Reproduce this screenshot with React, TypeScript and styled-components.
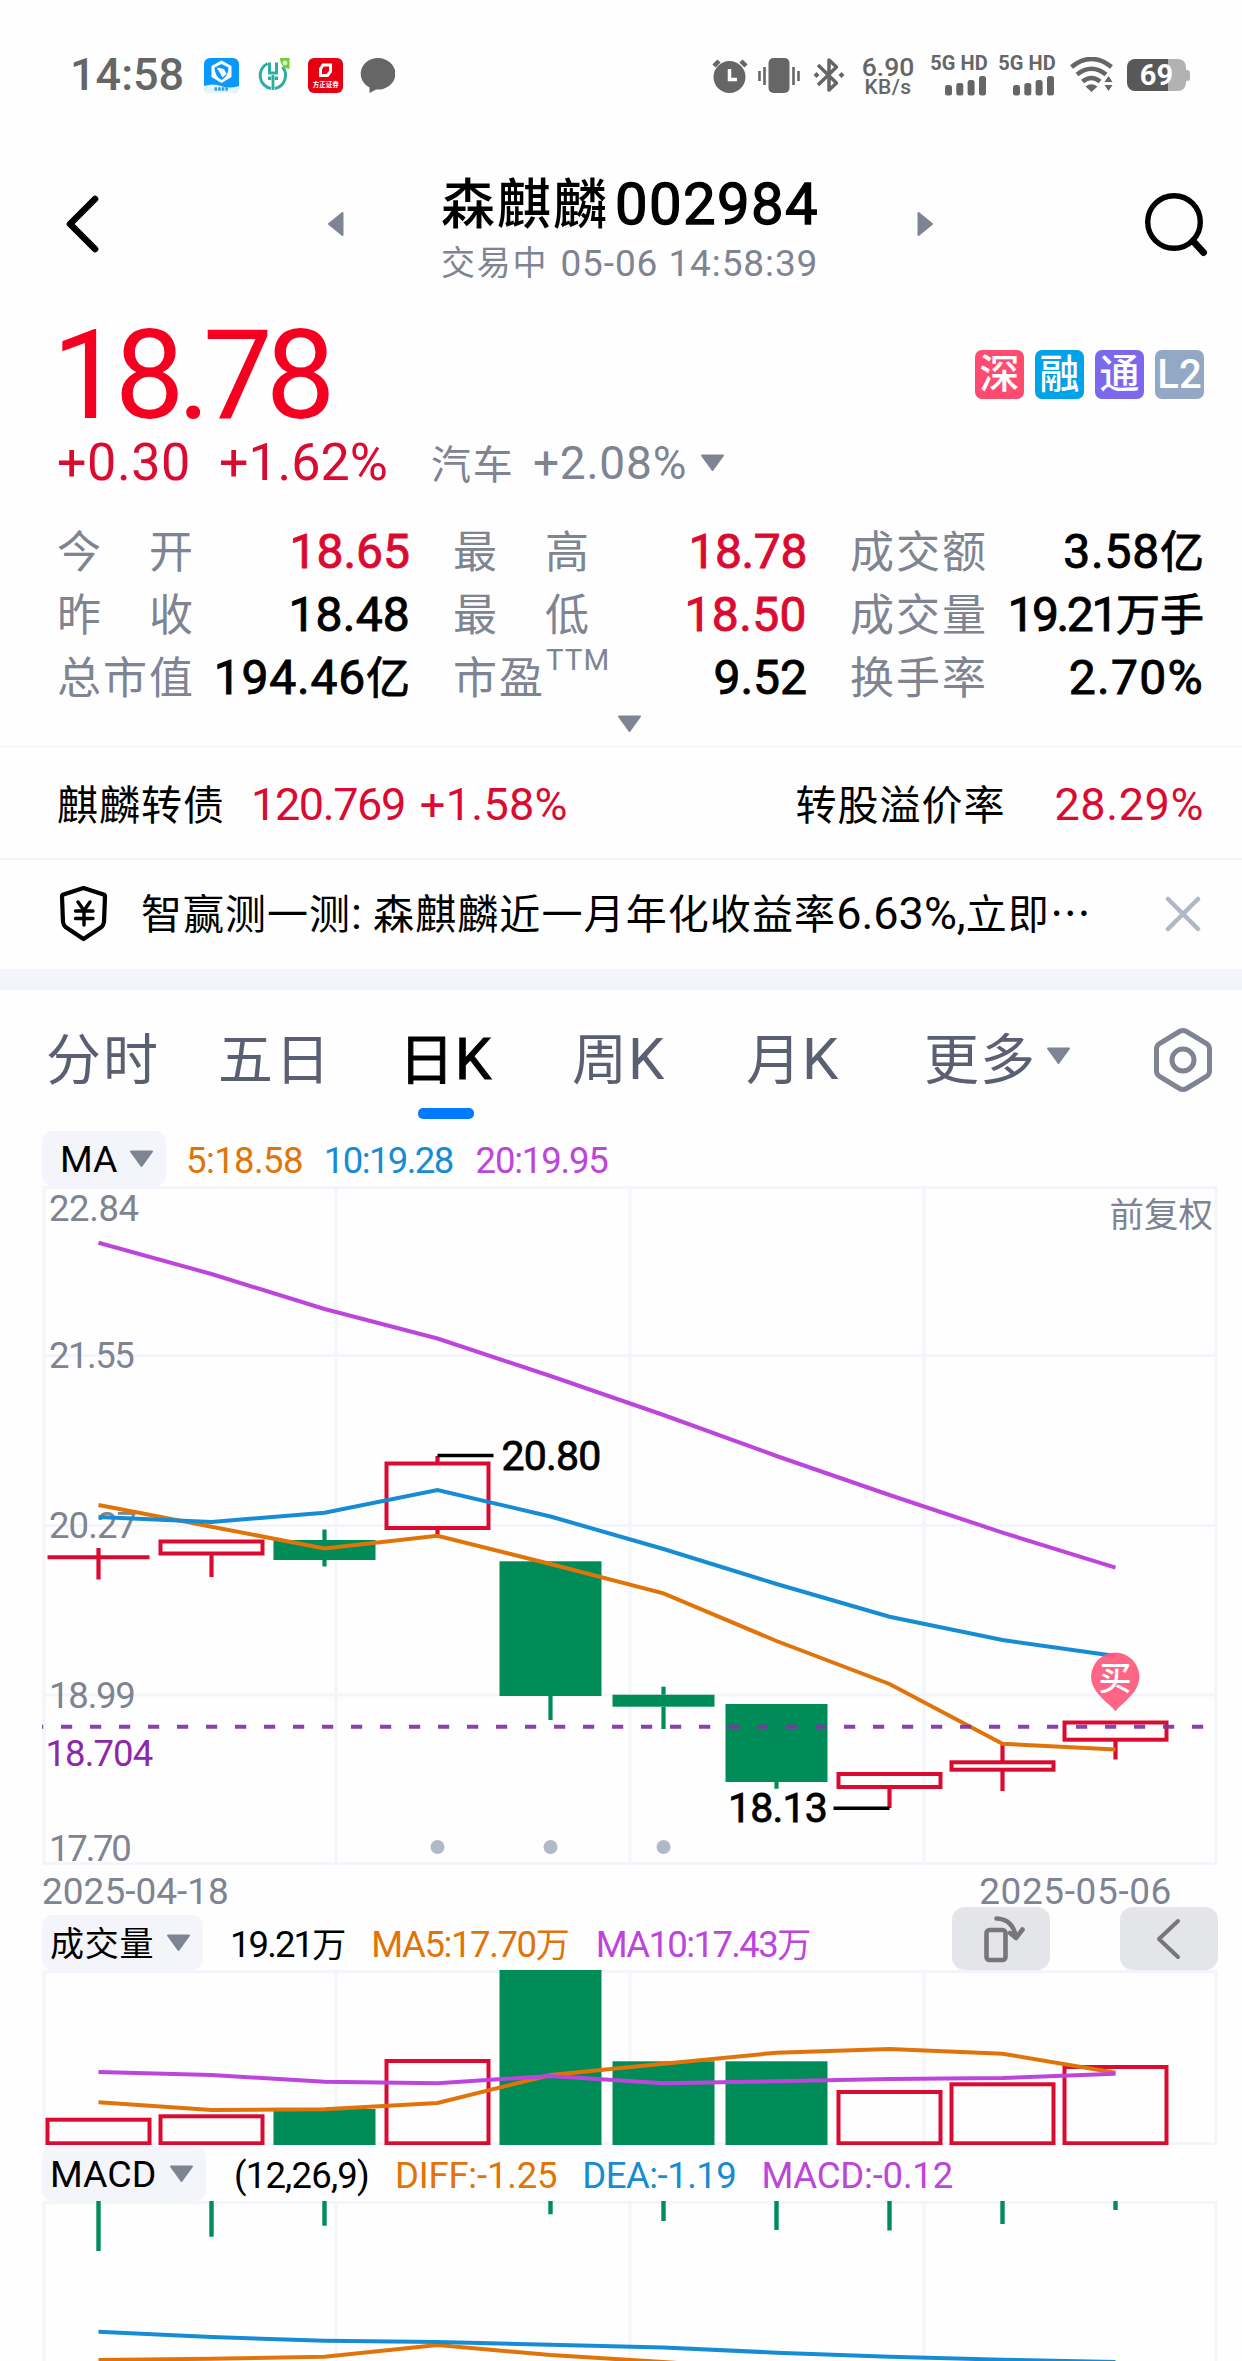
import React from 'react';
import styled, { createGlobalStyle } from 'styled-components';

const GRAY = '#7e8492';
const RED = '#db0a30';
const GREEN = '#008c58';
const ORANGE = '#e07409';
const BLUE = '#168cd4';
const PURPLE = '#bd45dc';
const PALE = '#f4f5fa';
const FONT = `Roboto, 'Noto Sans CJK SC', sans-serif`;

const GlobalStyle = createGlobalStyle`
  * { box-sizing: border-box; }
  body { margin: 0; background: #fefefe; }
`;

const Page = styled.main`
  width: 1242px;
  height: 2361px;
  overflow: hidden;
  background: #fefefe;
  font-family: ${FONT};
  color: #000;
  display: flex;
  flex-direction: column;
  white-space: pre;
  svg { display: block; flex: none; }
`;

/* ---------- text ---------- */

const Text = styled.span<{ $size: number; $color?: string; $weight?: number; $ls?: number; $ml?: number; $stroke?: number }>`
  font-size: ${(p) => p.$size}px;
  color: ${(p) => p.$color ?? 'inherit'};
  font-weight: ${(p) => p.$weight ?? 400};
  letter-spacing: ${(p) => p.$ls ?? 0}px;
  margin-left: ${(p) => p.$ml ?? 0}px;
  -webkit-text-stroke-width: ${(p) => p.$stroke ?? 0}px;
`;

const Han = styled.span<{ $size: number; $ls?: number; $weight?: number }>`
  font-family: 'Noto Sans CJK SC', sans-serif;
  font-size: ${(p) => p.$size}px;
  font-weight: ${(p) => p.$weight ?? 'inherit'};
  letter-spacing: ${(p) => p.$ls ?? 0}px;
  line-height: 0;
`;

/* ---------- status bar ---------- */

const StatusBar = styled.header`
  height: 100px;
  padding: 50px 52px 0 70px;
  display: flex;
  justify-content: space-between;
  line-height: 50px;
  color: #666;
`;

const StatusGroup = styled.div`
  display: flex;
  align-items: center;
`;

const StatusIcon = styled.span<{ $ml: number }>`
  margin-left: ${(p) => p.$ml}px;
`;

const NetSpeed = styled.div`
  width: 56px;
  margin-left: 15px;
  padding-top: 3px;
  display: flex;
  flex-direction: column;
  align-items: center;
  line-height: 21px;
`;

const SignalStack = styled.div<{ $ml: number }>`
  width: 58px;
  margin-left: ${(p) => p.$ml}px;
  display: flex;
  flex-direction: column;
  align-items: center;
  gap: 4px;
  line-height: 17px;
`;

const AppTile = styled.div<{ $ml: number }>`
  width: 35px;
  height: 35px;
  margin-left: ${(p) => p.$ml}px;
  border-radius: 6px;
  background: #e60012;
  color: #fff;
  display: flex;
  flex-direction: column;
  align-items: center;
  padding-top: 5px;
`;

const TileCaption = styled.span`
  font: 700 6.5px/8px 'Noto Sans CJK SC', sans-serif;
  margin-top: 2px;
`;

const Battery = styled.div`
  display: flex;
  align-items: center;
  margin-left: 14px;
`;

const BatteryBody = styled.div`
  width: 59px;
  height: 32px;
  border-radius: 8px;
  background: linear-gradient(90deg, #585858 70%, #b2b2b2 70%);
  color: #fff;
  font-size: 29px;
  font-weight: 700;
  line-height: 33px;
  text-align: center;
`;

const BatteryTip = styled.div`
  width: 4px;
  height: 11px;
  border-radius: 0 3px 3px 0;
  background: #b2b2b2;
`;

/* ---------- header ---------- */

const Header = styled.section`
  height: 200px;
  display: grid;
  grid-template-columns: 265px 114px 476px 225px 64px;
  align-items: center;
  padding: 48px 0 0 62px;
`;

const TitleBlock = styled.div`
  display: flex;
  flex-direction: column;
  align-self: start;
  margin-top: 26px;
`;

const TitleLine = styled.div`
  display: flex;
  align-items: baseline;
  height: 60px;
  line-height: 60px;
`;

const SubLine = styled.div`
  display: flex;
  height: 58px;
  line-height: 59px;
  color: ${GRAY};
`;

/* ---------- quote ---------- */

const Quote = styled.section`
  height: 447px;
  padding: 12px 38px 0 57px;
  border-bottom: 1px solid #f1f1f4;
`;

const PriceRow = styled.div`
  height: 128px;
  line-height: 128px;
  display: flex;
  justify-content: space-between;
`;

const Badges = styled.div`
  display: flex;
  gap: 11px;
  padding-top: 38px;
`;

const Badge = styled.span<{ $bg: string }>`
  width: 49px;
  height: 49px;
  border-radius: 7px;
  background: ${(p) => p.$bg};
  color: #fff;
  font-size: 40px;
  font-weight: 500;
  line-height: 49px;
  text-align: center;
`;

const ChangeRow = styled.div`
  height: 46px;
  line-height: 46px;
  display: flex;
  align-items: center;
`;

const ChangeCaret = styled.span`
  margin-left: 13px;
`;

const Stats = styled.div`
  margin-top: 34px;
  display: grid;
  grid-template-columns: 353px 354px 354px;
  column-gap: 43px;
  grid-auto-rows: 63px;
`;

const Stat = styled.div`
  display: flex;
  justify-content: space-between;
  line-height: 63px;
`;

const StatLabel = styled.span`
  width: 136px;
  padding-top: 2px;
  display: flex;
  justify-content: space-between;
  font-size: 44px;
  color: ${GRAY};
`;

const PeLabel = styled.span`
  display: flex;
  align-items: flex-start;
  color: ${GRAY};
  padding-top: 2px;
`;

const Sup = styled.span`
  font-size: 29.5px;
  line-height: 24px;
  letter-spacing: 1px;
  margin-left: 1px;
`;

const StatValue = styled.span<{ $up?: boolean; $ls?: number }>`
  font-size: 48px;
  -webkit-text-stroke-width: 0.9px;
  letter-spacing: ${(p) => p.$ls ?? 0}px;
  color: ${(p) => (p.$up ? RED : '#000')};
`;

const Expand = styled.div`
  display: flex;
  justify-content: center;
  padding-top: 6px;
  margin-right: 3px;
`;

/* ---------- rows under the quote ---------- */

const BondRow = styled.section`
  height: 113px;
  padding: 3px 38px 0 57px;
  line-height: 109px;
  border-bottom: 2px solid ${PALE};
  display: flex;
`;

const Spacer = styled.div`
  flex: 1;
`;

const Notice = styled.section`
  height: 109px;
  padding: 0 41px 2px 58px;
  line-height: 106px;
  display: flex;
  align-items: center;
`;

const Band = styled.div`
  height: 21px;
  background: ${PALE};
`;

/* ---------- tabs ---------- */

const Tabs = styled.nav`
  height: 140px;
  padding: 20px 0 0 46px;
  display: grid;
  grid-template-columns: 172px 181px 173px 174px 178px 226px auto;
`;

const Tab = styled.div<{ $active?: boolean }>`
  color: ${(p) => (p.$active ? '#000' : '#5a6072')};
  -webkit-text-stroke-width: ${(p) => (p.$active ? 1 : 0)}px;
`;

const TabLabel = styled.div`
  height: 98px;
  display: flex;
  font-size: 58px;
  line-height: 98px;
`;

const TabCaret = styled.span`
  padding-top: 37px;
  margin-left: 10px;
`;

const Underline = styled.div`
  width: 56px;
  height: 11px;
  border-radius: 5px;
  margin-left: 19px;
  background: #007aff;
`;

const Settings = styled.div`
  padding-top: 17px;
`;

/* ---------- indicator rows ---------- */

const IndicatorRow = styled.div<{ $h: number }>`
  height: ${(p) => p.$h}px;
  padding: 0 24px 0 42px;
  display: flex;
  align-items: flex-end;
`;

const Pill = styled.div<{ $w: number; $pl: number }>`
  width: ${(p) => p.$w}px;
  height: 55px;
  padding: 1px 12px 0 ${(p) => p.$pl}px;
  border-radius: 11px;
  background: ${PALE};
  display: flex;
  align-items: center;
  justify-content: space-between;
  line-height: 57px;
`;

const Values = styled.div`
  display: flex;
  line-height: 50px;
`;

const ToolButton = styled.button<{ $ml: number }>`
  width: 98px;
  height: 63px;
  margin: 0 0 0 ${(p) => p.$ml}px;
  padding: 0;
  border: 0;
  border-radius: 13px;
  background: #e4e5e9;
  display: flex;
  align-items: center;
  justify-content: center;
`;

const DateRow = styled.div`
  height: 41px;
  padding: 0 70px 0 42px;
  line-height: 51px;
  display: flex;
  justify-content: space-between;
  color: ${GRAY};
`;

const ChartSvg = styled.svg`
  overflow: visible;
`;

/* ---------- icons ---------- */

const Caret = () => (
  <svg width="25" height="18" viewBox="0 0 25 18">
    <path d="M2 1.5H23L12.5 16Z" fill={GRAY} stroke={GRAY} strokeWidth="2" strokeLinejoin="round" />
  </svg>
);

const SideArrow = ({ flip }: { flip?: boolean }) => (
  <svg width="17" height="26" viewBox="0 0 17 26">
    <path d={flip ? 'M1.5 2V24L15 13Z' : 'M15.5 2V24L2 13Z'} fill={GRAY} stroke={GRAY} strokeWidth="2" strokeLinejoin="round" />
  </svg>
);

const ShieldApp = () => (
  <svg width="35" height="35" viewBox="0 0 35 35">
    <rect width="35" height="35" rx="6" fill="#0a98fb" />
    <path d="M0 28Q9 25 17 28T35 28V29Q35 35 29 35H6Q0 35 0 29Z" fill="#e3f5ff" />
    <path d="M17.500 2.500L27.500 8V19L17.500 25L7.500 19V8Z" fill="#fff" />
    <path d="M17.500 6L24.500 9.500Q24.500 18 17.500 22Q10.500 18 10.500 9.500Z" fill="#0a98fb" />
    <path d="M12.500 9.500L20 11L22.500 16L18.500 19.500L16 15Z" fill="#fff" />
    <path d="M10.500 31H24.500" stroke="#3b9fd8" strokeWidth="3.500" strokeDasharray="2.600 1" />
  </svg>
);

const BankApp = () => (
  <svg width="33" height="35" viewBox="0 0 33 35">
    <path d="M9.500 5.500A13.300 13.300 0 0 0 13 30.500M17 30.500A13.300 13.300 0 0 0 24.500 9" fill="none" stroke="#2fae9f" strokeWidth="3" />
    <path d="M10 4.500H13V13.500H17V4.500H20V16.500H10ZM10 18.500H14V22H10ZM16 18.500H20V22H16ZM13.600 16V32H16.400V16Z" fill="#2fae9f" />
    <path d="M22 0H31.500V11Q22 10 22 0Z" fill="#6fcf3c" />
    <circle cx="27" cy="5" r="2.400" fill="#d7f7c4" />
  </svg>
);

const Bubble = () => (
  <svg width="35" height="35" viewBox="0 0 35 35">
    <path d="M17.500 0A17.500 15.800 0 1 1 16 31.500Q13 33 9.500 35V29.500A17.500 15.800 0 0 1 17.500 0Z" fill="#666" />
  </svg>
);

const Alarm = () => (
  <svg width="36" height="35" viewBox="0 0 36 35">
    <circle cx="17.500" cy="19" r="16" fill="#666" />
    <path d="M2 8L7 3M29 3L34 8" stroke="#666" strokeWidth="4.500" />
    <path d="M17.500 11V21.500H25" stroke="#fff" strokeWidth="3.500" fill="none" />
  </svg>
);

const Vibrate = () => (
  <svg width="42" height="35" viewBox="0 0 42 35">
    <rect x="10.500" y="0" width="21" height="35" rx="5" fill="#666" />
    <path d="M1.500 13V23M6.500 9V27M35.500 9V27M40.500 13V23" stroke="#666" strokeWidth="2.600" />
  </svg>
);

const Bluetooth = () => (
  <svg width="32" height="36" viewBox="0 0 32 36">
    <path d="M5 8L23.500 26L16 33V3L23.500 10L5 28" fill="none" stroke="#666" strokeWidth="3.500" strokeLinejoin="round" />
    <path d="M3.500 15L6.500 18L3.500 21L0.500 18ZM28.500 15L31.500 18L28.500 21L25.500 18Z" fill="#666" />
  </svg>
);

const Bars = () => (
  <svg width="41" height="20" viewBox="0 0 41 20">
    <g fill="#666">
      <rect x="0" y="9" width="7" height="10.500" rx="2.500" />
      <rect x="11.300" y="7" width="7" height="12.500" rx="2.500" />
      <rect x="22.600" y="4" width="7" height="15.500" rx="2.500" />
      <rect x="34" y="0" width="7" height="19.500" rx="2.500" />
    </g>
  </svg>
);

const Wifi = () => (
  <svg width="43" height="36" viewBox="0 0 43 36">
    <g fill="none" stroke="#666" strokeWidth="4.600">
      <path d="M1.500 10Q21.500 -6 41.500 10" />
      <path d="M7 17.500Q21.500 6 36 17.500" />
      <path d="M12.500 24.500Q21.500 17.500 30 24.500" />
    </g>
    <path d="M15.500 29.500Q21.500 25 27.500 29.500L21.500 35Z" fill="#666" />
    <path d="M34.500 25L38.500 19L42.500 25ZM34.500 28L38.500 34L42.500 28Z" fill="#666" />
  </svg>
);

const ShieldYen = () => (
  <svg width="50" height="57" viewBox="0 0 50 57">
    <g fill="none" stroke="#000" strokeLinecap="round" strokeLinejoin="round">
      <path d="M25.500 3L5.500 9.500Q4 10 4 11.500L5 37Q5.500 40 7.500 42L25.500 54L43.500 42Q45.500 40 46 37L47 11.500Q47 10 45.500 9.500Z" strokeWidth="4.200" />
      <path d="M20 17L26 25.500L32 17M26 25.500V40M17.500 26H35M17.500 33.500H35" strokeWidth="3.400" />
    </g>
  </svg>
);

/* ---------- chart data, in page pixels ---------- */

const XS = Array.from({ length: 10 }, (_, i) => 98.5 + i * 113);
const VLINES = [44, 336, 630, 924, 1216];

type Candle = { up: boolean; top: number; bottom: number; high: number; low: number };
const CANDLES: Candle[] = [
  { up: true, top: 1557.3, bottom: 1557.3, high: 1548, low: 1579.5 },
  { up: true, top: 1541.5, bottom: 1553.5, high: 1541.5, low: 1577 },
  { up: false, top: 1540, bottom: 1560, high: 1529.5, low: 1566.5 },
  { up: true, top: 1463.5, bottom: 1528, high: 1456, low: 1535 },
  { up: false, top: 1561.3, bottom: 1696, high: 1561.3, low: 1720 },
  { up: false, top: 1694.7, bottom: 1706.7, high: 1686.7, low: 1729 },
  { up: false, top: 1704, bottom: 1782, high: 1704, low: 1788.7 },
  { up: true, top: 1774, bottom: 1787, high: 1774, low: 1808 },
  { up: true, top: 1762.3, bottom: 1769.7, high: 1744, low: 1791 },
  { up: true, top: 1722.5, bottom: 1739.7, high: 1722.5, low: 1759.5 },
];
const VOLUME_TOPS = [2117.7, 2114.3, 2109, 2059, 1970, 2061.3, 2061.3, 2090, 2082.3, 2065];
const MACD_ENDS = [2251, 2236.7, 2225.7, 0, 2214.3, 2221, 2230, 2230.5, 2224, 2210];

const MA5 = [1505, 1526.7, 1548.5, 1535.7, 1564, 1593.3, 1641, 1684, 1743.7, 1749.5];
const MA10 = [1517, 1522, 1512.7, 1490, 1516.5, 1549, 1584, 1616.7, 1640, 1656];
const MA20 = [1242.7, 1274, 1309, 1338.5, 1376, 1415, 1456, 1495, 1532.6, 1567.7];
const VOL5 = [2102.3, 2110, 2109.3, 2103, 2075, 2063.7, 2052.7, 2049, 2053.7, 2072.7];
const VOL10 = [2072, 2075, 2081.7, 2083.3, 2076, 2083.3, 2081.3, 2079, 2078, 2073.7];
const DEA = [2331.7, 2337, 2340.7, 2342, 2344.7, 2347.5, 2352.7, 2356.7, 2359.7, 2362];
const DIFF = [2360, 2358.7, 2356.7, 2345, 2355, 2362, 2370, 2376, 2380, 2382];

const Series = ({ ys, color }: { ys: number[]; color: string }) => (
  <polyline points={ys.map((y, i) => `${XS[i]},${y}`).join(' ')} fill="none" stroke={color} strokeWidth="4" />
);

const Grid = ({ top, bottom, rows = [] }: { top: number; bottom: number; rows?: number[] }) => (
  <g stroke={PALE} strokeWidth="3.2">
    {[top, ...rows, bottom].map((y) => (
      <line key={y} x1="42.5" x2="1217.5" y1={y} y2={y} />
    ))}
    {VLINES.map((x) => (
      <line key={x} x1={x} x2={x} y1={top} y2={bottom} />
    ))}
  </g>
);

const AXIS = [
  { y: 1220.5, label: '22.84', ls: -0.4 },
  { y: 1368, label: '21.55', ls: -1.5 },
  { y: 1538, label: '20.27', ls: -0.9 },
  { y: 1708, label: '18.99', ls: -1.2 },
  { y: 1861, label: '17.70', ls: -2.2 },
];

const PriceChart = () => (
  <ChartSvg width="1242" height="680" viewBox="0 1186 1242 680" fontFamily={FONT}>
    <Grid top={1187.5} rows={[1355.5, 1525.5, 1695]} bottom={1863.5} />
    {AXIS.map((a) => (
      <text key={a.label} x="49" y={a.y} fontSize="36.500" fill={GRAY} letterSpacing={a.ls}>{a.label}</text>
    ))}
    <text x="1213" y="1227" fontSize="34.500" textAnchor="end" fill={GRAY}>前复权</text>
    <text x="45.500" y="1766" fontSize="36.500" letterSpacing="-0.9" fill="#8a2aa6">18.704</text>
    {CANDLES.map((c, i) => {
      const color = c.up ? RED : GREEN;
      return (
        <g key={i} stroke={color}>
          <line x1={XS[i]} x2={XS[i]} y1={c.high} y2={c.top} strokeWidth="4.200" />
          <line x1={XS[i]} x2={XS[i]} y1={c.bottom} y2={c.low} strokeWidth="4.200" />
          {c.top === c.bottom ? (
            <line x1={XS[i] - 51} x2={XS[i] + 51} y1={c.top} y2={c.top} strokeWidth="4" />
          ) : c.up ? (
            <rect x={XS[i] - 51} y={c.top} width="102" height={c.bottom - c.top} fill="none" strokeWidth="4" />
          ) : (
            <rect x={XS[i] - 51} y={c.top} width="102" height={c.bottom - c.top} fill={color} stroke="none" />
          )}
        </g>
      );
    })}
    <Series ys={MA20} color={PURPLE} />
    <Series ys={MA5} color={ORANGE} />
    <Series ys={MA10} color={BLUE} />
    <line x1="42" x2="1203.500" y1="1726.800" y2="1726.800" stroke="#8233a6" strokeOpacity="0.93" strokeWidth="4" strokeDasharray="11.200 17.800" strokeDashoffset="10" />
    <path d="M437.500 1455.500H493.500M833.500 1808.300H889.500" stroke="#000" strokeWidth="3.600" />
    <g fontSize="41" letterSpacing="-0.8" stroke="#000" strokeWidth="0.8">
      <text x="501.500" y="1470">20.80</text>
      <text x="728" y="1822">18.13</text>
    </g>
    {[3, 4, 5].map((i) => (
      <circle key={i} cx={XS[i]} cy="1847" r="7" fill="#b2b9c6" />
    ))}
    <path d="M1115.500 1711.500C1112 1705 1091 1694 1091 1676A24.300 25 0 0 1 1139.500 1676C1139.500 1694 1119 1705 1115.500 1711.500Z" fill="#ff5a7c" fillOpacity="0.93" />
    <text x="1115" y="1690" fontSize="33" fontWeight="500" textAnchor="middle" fill="#fff">买</text>
  </ChartSvg>
);

const VolumeChart = () => (
  <svg width="1242" height="175" viewBox="0 1970 1242 175">
    <Grid top={1971.7} bottom={2143.5} />
    {VOLUME_TOPS.map((y, i) =>
      CANDLES[i].up ? (
        <rect key={i} x={XS[i] - 51} y={y + 2} width="102" height={2143.3 - y - 2} fill="none" stroke={RED} strokeWidth="4" />
      ) : (
        <rect key={i} x={XS[i] - 51} y={y} width="102" height={2145 - y} fill={GREEN} />
      )
    )}
    <Series ys={VOL5} color={ORANGE} />
    <Series ys={VOL10} color={PURPLE} />
  </svg>
);

const MacdChart = () => (
  <svg width="1242" height="160" viewBox="0 2201 1242 160">
    <Grid top={2202.7} bottom={2380} />
    {MACD_ENDS.map((y, i) => y > 0 && <line key={i} x1={XS[i]} x2={XS[i]} y1="2201" y2={y} stroke={GREEN} strokeWidth="4.400" />)}
    <Series ys={DIFF} color={ORANGE} />
    <Series ys={DEA} color={BLUE} />
  </svg>
);

/* ---------- page ---------- */

const Spread = ({ text }: { text: string }) => (
  <StatLabel>
    {text.split('').map((c) => (
      <span key={c}>{c}</span>
    ))}
  </StatLabel>
);

const Signal = ({ ml }: { ml: number }) => (
  <SignalStack $ml={ml}>
    <Text $size={20} $weight={700} $ls={0.1}>5G HD</Text>
    <StatusIcon $ml={13}><Bars /></StatusIcon>
  </SignalStack>
);

export default function App() {
  return (
    <Page>
      <GlobalStyle />
      <StatusBar>
        <StatusGroup>
          <Text $size={45} $weight={500} $ls={0}>14:58</Text>
          <StatusIcon $ml={20}><ShieldApp /></StatusIcon>
          <StatusIcon $ml={19}><BankApp /></StatusIcon>
          <AppTile $ml={17}>
            <svg width="15" height="15" viewBox="0 0 15 15">
              <path d="M5 2H12.500V8.500L9.500 12.500H2.500V6Z" fill="none" stroke="#fff" strokeWidth="3" />
            </svg>
            <TileCaption>方正证券</TileCaption>
          </AppTile>
          <StatusIcon $ml={17}><Bubble /></StatusIcon>
        </StatusGroup>
        <StatusGroup>
          <StatusIcon $ml={0}><Alarm /></StatusIcon>
          <StatusIcon $ml={10}><Vibrate /></StatusIcon>
          <StatusIcon $ml={13}><Bluetooth /></StatusIcon>
          <NetSpeed>
            <Text $size={26.5} $weight={500}>6.90</Text>
            <Text $size={21} $weight={500} $ls={0.4}>KB/s</Text>
          </NetSpeed>
          <Signal ml={14} />
          <Signal ml={10} />
          <StatusIcon $ml={14}><Wifi /></StatusIcon>
          <Battery>
            <BatteryBody>69</BatteryBody>
            <BatteryTip />
          </Battery>
        </StatusGroup>
      </StatusBar>

      <Header>
        <svg width="40" height="60" viewBox="0 0 40 60">
          <path d="M33 5L8 30L33 55" fill="none" stroke="#000" strokeWidth="6.600" strokeLinecap="round" strokeLinejoin="round" />
        </svg>
        <SideArrow />
        <TitleBlock>
          <TitleLine>
            <Han $size={54} $ls={2} $weight={500}>森麒麟</Han>
            <Text $size={58} $stroke={1.3} $ls={1.4} $ml={6}>002984</Text>
          </TitleLine>
          <SubLine>
            <Text $size={35}><Han $size={34} $ls={1.8}>交易中</Han></Text>
            <Text $size={37} $ml={12} $ls={0.9}>05-06 14:58:39</Text>
          </SubLine>
        </TitleBlock>
        <SideArrow flip />
        <svg width="66" height="66" viewBox="0 0 66 66">
          <circle cx="32" cy="31" r="26.300" fill="none" stroke="#000" strokeWidth="5.400" />
          <path d="M51 50L61.500 61.500" stroke="#000" strokeWidth="7" strokeLinecap="round" />
        </svg>
      </Header>

      <Quote>
        <PriceRow>
          <Text $size={124} $color="#f50021" $ls={-7} $ml={-5}>18.78</Text>
          <Badges>
            <Badge $bg="#ff4b6f">深</Badge>
            <Badge $bg="#00a2ea">融</Badge>
            <Badge $bg="#7b68ec">通</Badge>
            <Badge $bg="#93a8c4">L2</Badge>
          </Badges>
        </PriceRow>
        <ChangeRow>
          <Text $size={52} $color={RED} $ls={0.6}>+0.30</Text>
          <Text $size={52} $color={RED} $ml={28}>+1.62%</Text>
          <Text $size={46} $color={GRAY} $ml={43}><Han $size={40} $ls={2}>汽车</Han></Text>
          <Text $size={46} $color={GRAY} $ml={18} $ls={0.8}>+2.08%</Text>
          <ChangeCaret><Caret /></ChangeCaret>
        </ChangeRow>
        <Stats>
          <Stat><Spread text="今开" /><StatValue $up>18.65</StatValue></Stat>
          <Stat><Spread text="最高" /><StatValue $up $ls={-0.4}>18.78</StatValue></Stat>
          <Stat><Spread text="成交额" /><StatValue $ls={0.8}>3.58<Han $size={44}>亿</Han></StatValue></Stat>
          <Stat><Spread text="昨收" /><StatValue $ls={0.2}>18.48</StatValue></Stat>
          <Stat><Spread text="最低" /><StatValue $up $ls={0.4}>18.50</StatValue></Stat>
          <Stat><Spread text="成交量" /><StatValue $ls={-2.4}>19.21<Han $size={44}>万手</Han></StatValue></Stat>
          <Stat><Spread text="总市值" /><StatValue $ls={0.8}>194.46<Han $size={44}>亿</Han></StatValue></Stat>
          <Stat>
            <PeLabel><Text $size={44}><Han $size={44} $ls={2}>市盈</Han></Text><Sup>TTM</Sup></PeLabel>
            <StatValue>9.52</StatValue>
          </Stat>
          <Stat><Spread text="换手率" /><StatValue $ls={1.3}>2.70%</StatValue></Stat>
        </Stats>
        <Expand><Caret /></Expand>
      </Quote>

      <BondRow>
        <Text $size={45}><Han $size={41} $ls={1}>麒麟转债</Han></Text>
        <Text $size={45} $color={RED} $ml={26} $ls={-1.4}>120.769</Text>
        <Text $size={45} $color={RED} $ml={15} $ls={0.3}>+1.58%</Text>
        <Spacer />
        <Text $size={45}><Han $size={41} $ls={1}>转股溢价率</Han></Text>
        <Text $size={45} $color={RED} $ml={49} $ls={0.6}>28.29%</Text>
      </BondRow>

      <Notice>
        <ShieldYen />
        <Text $size={45} $ml={33}>
          <Han $size={41} $ls={1}>智赢测一测</Han>: <Han $size={41} $ls={1.1}>森麒麟近一月年化收益率</Han>6.63%,<Han $size={41} $ls={1}>立即…</Han>
        </Text>
        <Spacer />
        <svg width="36" height="36" viewBox="0 0 36 36">
          <path d="M3 3L33 33M33 3L3 33" stroke="#b0b8c6" strokeWidth="4.500" strokeLinecap="round" />
        </svg>
      </Notice>

      <Band />

      <Tabs>
        <Tab><TabLabel><span><Han $size={55} $ls={2}>分时</Han></span></TabLabel></Tab>
        <Tab><TabLabel><span><Han $size={55} $ls={2}>五日</Han></span></TabLabel></Tab>
        <Tab $active>
          <TabLabel><span><Han $size={55} $ls={1}>日</Han>K</span></TabLabel>
          <Underline />
        </Tab>
        <Tab><TabLabel><span><Han $size={55} $ls={1}>周</Han>K</span></TabLabel></Tab>
        <Tab><TabLabel><span><Han $size={55} $ls={1}>月</Han>K</span></TabLabel></Tab>
        <Tab><TabLabel><span><Han $size={55} $ls={1}>更多</Han></span><TabCaret><Caret /></TabCaret></TabLabel></Tab>
        <Settings>
          <svg width="66" height="68" viewBox="0 0 66 68">
            <g fill="none" stroke={GRAY} strokeWidth="5">
              <path d="M29.500 4.500Q33 2.500 36.500 4.500L56.500 16.500Q59.500 18.500 59.500 22V44Q59.500 47.500 56.500 49.500L36.500 61.500Q33 63.500 29.500 61.500L9.500 49.500Q6.500 47.500 6.500 44V22Q6.500 18.500 9.500 16.500Z" />
              <circle cx="33" cy="33" r="11" />
            </g>
          </svg>
        </Settings>
      </Tabs>

      <IndicatorRow $h={56}>
        <Pill $w={124} $pl={18}><Text $size={37.5}>MA</Text><Caret /></Pill>
        <Values>
          <Text $size={36.5} $color={ORANGE} $ml={20} $ls={-0.6}>5:18.58</Text>
          <Text $size={36.5} $color={BLUE} $ml={21} $ls={-1.6}>10:19.28</Text>
          <Text $size={36.5} $color={PURPLE} $ml={23} $ls={-1.2}>20:19.95</Text>
        </Values>
      </IndicatorRow>
      <PriceChart />
      <DateRow>
        <Text $size={37}>2025-04-18</Text>
        <Text $size={37} $ls={0.6}>2025-05-06</Text>
      </DateRow>

      <IndicatorRow $h={63}>
        <Pill $w={161} $pl={8}><Text $size={37}><Han $size={34} $ls={0.7}>成交量</Han></Text><Caret /></Pill>
        <Values>
          <Text $size={36.5} $ml={27} $ls={-1.9}>19.21<Han $size={34}>万</Han></Text>
          <Text $size={36.5} $color={ORANGE} $ml={25} $ls={-1.4}>MA5:17.70<Han $size={34}>万</Han></Text>
          <Text $size={36.5} $color={PURPLE} $ml={26} $ls={-1.6}>MA10:17.43<Han $size={34}>万</Han></Text>
        </Values>
        <Spacer />
        <ToolButton $ml={0}>
          <svg width="50" height="50" viewBox="976 1913 50 50">
            <g fill="none" stroke="#777" strokeWidth="4.600" strokeLinecap="round" strokeLinejoin="round">
              <rect x="986.500" y="1929" width="19" height="30" rx="3" />
              <path d="M996.500 1917.500Q1013 1918 1016 1936.500M1010 1932L1016 1937L1022.500 1928.500" />
            </g>
          </svg>
        </ToolButton>
        <ToolButton $ml={70}>
          <svg width="26" height="44" viewBox="0 0 26 44">
            <path d="M22 4L3 22L22 40" fill="none" stroke="#777" strokeWidth="4" strokeLinecap="round" strokeLinejoin="round" />
          </svg>
        </ToolButton>
      </IndicatorRow>
      <VolumeChart />

      <IndicatorRow $h={56}>
        <Pill $w={164} $pl={8}><Text $size={37.5}>MACD</Text><Caret /></Pill>
        <Values>
          <Text $size={36.5} $ml={28} $ls={-0.8}>(12,26,9)</Text>
          <Text $size={36.5} $color={ORANGE} $ml={26} $ls={-0.2}>DIFF:-1.25</Text>
          <Text $size={36.5} $color={BLUE} $ml={25} $ls={-0.5}>DEA:-1.19</Text>
          <Text $size={36.5} $color={PURPLE} $ml={25} $ls={-0.2}>MACD:-0.12</Text>
        </Values>
      </IndicatorRow>
      <MacdChart />
    </Page>
  );
}
